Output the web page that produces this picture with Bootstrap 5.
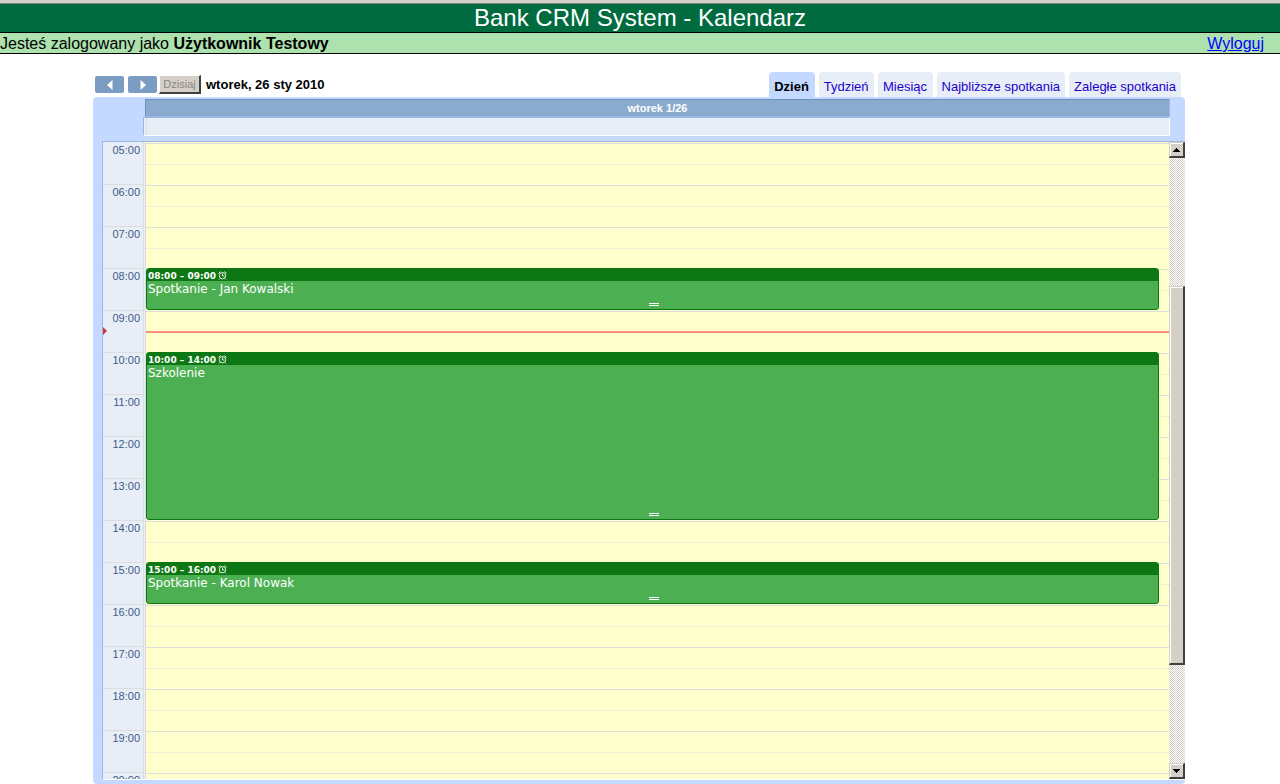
<!DOCTYPE html>
<html lang="pl">
<head>
<meta charset="utf-8">
<meta name="viewport" content="width=device-width, initial-scale=1">
<title>Bank CRM System - Kalendarz</title>
<link href="https://cdn.jsdelivr.net/npm/bootstrap@5.3.0/dist/css/bootstrap.min.css" rel="stylesheet">
<style>
  body { font-family: "Liberation Sans", Arial, sans-serif; font-size: 16px; line-height: 20px; color: #000; background: #fff; }
  .app-title { background: #006b3f; border-top: 1px solid #808080; border-bottom: 1px solid #000; box-shadow: 0 -3px #d4d0c8; margin-top: 3px; font-size: 24px; line-height: 28px; font-weight: 400; color: #fff; }
  .user-bar { height: 21px; line-height: 22px; background: #ade1ad; border-bottom: 1px solid #000; }
  .user-bar a { color: #00f; margin-right: 16px; }
  .calendar { padding: 18px 95px 0 93px; min-height: 0; }
  .cal-toolbar { height: 25px; padding: 0 4px 0 2px; }
  .step-btn { width: 29px; height: 17px; background: #7a9bc2; border: 0; border-radius: 2px; margin-right: 4px; }
  .today-btn { width: 42px; height: 19px; margin-left: -2px; margin-right: 5px; font-size: 11px; line-height: 16px; color: #8a8780; background: #d4d0c8; border: solid; border-width: 1px 2px 2px 1px; border-color: #fff #404040 #404040 #fff; white-space: nowrap; }
  .cal-date { font-size: 13px; line-height: 22px; }
  .view-tab { font-size: 13px; line-height: 25px; padding: 2px 5px 0; height: 25px; background: #e8eef7; color: #20c; text-decoration: none; text-align: center; border-radius: 4px 4px 0 0; white-space: nowrap; overflow: hidden; min-width: 55px; }
  .view-tab.current { background: #c3d9ff; color: #000; font-weight: 700; min-width: 46px; }
  .cal-frame { background: #c3d9ff; border-radius: 4px; padding: 2px 0 4px 9px; min-height: 0; }
  .day-head { margin: 0 15px 0 43px; height: 18px; background: #8aabce; border: solid; border-width: 1px 1px 1px 1px; border-color: #6b90bc #9bb9e0 #9bb9e0 #6b90bc; color: #fff; font-size: 11px; line-height: 17px; font-weight: 700; }
  .all-day { margin: 0 15px 5px 41px; height: 19px; background: #e8eef7; border: solid; border-width: 1px; border-color: #9bb9e0 #fff #fff #9bb9e0; padding-left: 1px; }
  .all-day::before { content: ""; display: block; width: 2px; height: 17px; border-right: 1px solid #ddd; }
  .grid-frame { border: solid; border-width: 1px 0 1px 1px; border-color: #9bb9e0 #fff #fff #9bb9e0; background: #e8eef7; min-height: 0; overflow: hidden; }
  .time-col { width: 40px; height: 0; flex: none; }
  .time-col li { height: 42px; border-top: 1px solid #ddd; padding-right: 3px; font-size: 11px; line-height: 14px; color: #3c5b87; text-align: right; }
  .time-col li:first-child { border-color: transparent; }
  .time-rule { width: 3px; flex: none; border: solid #ddd; border-width: 0 1px; }
  .day-col { background: #ffc; height: 100%; overflow: hidden; }
  .hour-slots { padding-top: 1px; }
  .hour-slot { height: 42px; border-top: 1px solid #ddd; padding-top: 20px; }
  .hour-slot::after { content: ""; display: block; border-top: 1px dotted #ddd; }
  .event { left: 0; right: 10px; background: #4cb052; border: 1px solid #0d7813; border-radius: 3px; color: #fff; overflow: hidden; }
  .event-time { background: #0d7813; height: 12px; padding-left: 1px; gap: 2px; font: 700 9px/14px "DejaVu Sans", Verdana, sans-serif; }
  .event-name { padding-left: 1px; font: 12px/17px "DejaVu Sans", Verdana, sans-serif; }
  .grip { left: 50%; bottom: 3px; width: 10px; height: 3px; margin-left: -4px; border: solid #fff; border-width: 1px 0; }
  .now-line { left: 0; right: 0; height: 2px; background: #ff9484; border-bottom: 1px dotted #e88070; }
  .now-mark { left: 0; }
  .scroller { width: 16px; flex: none; background: repeating-conic-gradient(#d4d0c8 0 25%, #fff 0 50%) 0 0 / 2px 2px; }
  .scroll-btn, .scroll-thumb { background: #d4d0c8; border: solid; border-width: 1px 2px 2px 1px; border-color: #d4d0c8 #404040 #404040 #d4d0c8; box-shadow: inset 1px 1px #fff; width: 16px; padding: 0; }
  .scroll-btn { height: 16px; line-height: 0; flex: none; }
  .space-above { flex: 129 1 0; }
  .scroll-thumb { flex: 378 1 0; }
  .space-below { flex: 98 1 0; }
</style>
</head>
<body class="vh-100 d-flex flex-column overflow-hidden">
<h1 class="app-title text-center mb-0 flex-shrink-0">Bank CRM System - Kalendarz</h1>
<div class="user-bar d-flex justify-content-between flex-shrink-0">
  <span>Jesteś zalogowany jako <b>Użytkownik Testowy</b></span>
  <a href="#">Wyloguj</a>
</div>

<main class="calendar d-flex flex-column flex-grow-1">
  <div class="cal-toolbar d-flex justify-content-between flex-shrink-0">
    <div class="d-flex align-items-center">
      <button class="step-btn d-flex align-items-center justify-content-center" aria-label="Poprzedni dzień"><svg width="6" height="10" viewBox="0 0 6 10"><path d="M5.500 0v10L0 5z" fill="#fff"/></svg></button>
      <button class="step-btn d-flex align-items-center justify-content-center" aria-label="Następny dzień"><svg width="6" height="10" viewBox="0 0 6 10"><path d="M.5 0v10L6 5z" fill="#fff"/></svg></button>
      <button class="today-btn p-0" disabled>Dzisiaj</button>
      <strong class="cal-date">wtorek, 26 sty 2010</strong>
    </div>
    <nav class="d-flex gap-1" aria-label="Widok">
      <a class="view-tab current" href="#">Dzień</a>
      <a class="view-tab" href="#">Tydzień</a>
      <a class="view-tab" href="#">Miesiąc</a>
      <a class="view-tab" href="#">Najbliższe spotkania</a>
      <a class="view-tab" href="#">Zaległe spotkania</a>
    </nav>
  </div>

  <div class="cal-frame d-flex flex-column flex-grow-1">
    <div class="day-head text-center flex-shrink-0">wtorek 1/26</div>
    <div class="all-day flex-shrink-0"></div>
    <div class="grid-frame d-flex flex-grow-1">
      <div class="position-relative">
        <ol class="time-col list-unstyled mb-0">
          <li>05:00</li><li>06:00</li><li>07:00</li><li>08:00</li><li>09:00</li><li>10:00</li><li>11:00</li><li>12:00</li>
          <li>13:00</li><li>14:00</li><li>15:00</li><li>16:00</li><li>17:00</li><li>18:00</li><li>19:00</li><li>20:00</li>
        </ol>
        <svg class="now-mark position-absolute" style="top:185px" width="4" height="8" viewBox="0 0 4 8"><path d="M0 0l4 4-4 4z" fill="#c33"/></svg>
      </div>
      <div class="time-rule"></div>
      <div class="day-col position-relative flex-grow-1">
        <div class="hour-slots">
          <div class="hour-slot"></div><div class="hour-slot"></div><div class="hour-slot"></div><div class="hour-slot"></div>
          <div class="hour-slot"></div><div class="hour-slot"></div><div class="hour-slot"></div><div class="hour-slot"></div>
          <div class="hour-slot"></div><div class="hour-slot"></div><div class="hour-slot"></div><div class="hour-slot"></div>
          <div class="hour-slot"></div><div class="hour-slot"></div><div class="hour-slot"></div><div class="hour-slot"></div>
        </div>
        <div class="now-line position-absolute" style="top:189px"></div>
        <article class="event position-absolute" style="top:126px;height:42px">
          <div class="event-time d-flex"><span>08:00 – 09:00</span><svg width="9" height="9" viewBox="0 0 9 9" class="align-self-center" fill="none" stroke="#fff"><use href="#alarm"/></svg></div>
          <div class="event-name">Spotkanie - Jan Kowalski</div>
          <div class="grip position-absolute"></div>
        </article>
        <article class="event position-absolute" style="top:210px;height:168px">
          <div class="event-time d-flex"><span>10:00 – 14:00</span><svg width="9" height="9" viewBox="0 0 9 9" class="align-self-center" fill="none" stroke="#fff"><use href="#alarm"/></svg></div>
          <div class="event-name">Szkolenie</div>
          <div class="grip position-absolute"></div>
        </article>
        <article class="event position-absolute" style="top:420px;height:42px">
          <div class="event-time d-flex"><span>15:00 – 16:00</span><svg width="9" height="9" viewBox="0 0 9 9" class="align-self-center" fill="none" stroke="#fff"><use href="#alarm"/></svg></div>
          <div class="event-name">Spotkanie - Karol Nowak</div>
          <div class="grip position-absolute"></div>
        </article>
      </div>
      <div class="scroller d-flex flex-column">
        <button class="scroll-btn" aria-label="Przewiń w górę"><svg width="7" height="4" viewBox="0 0 7 4" shape-rendering="crispEdges"><path d="M3 0h1v1h1v1h1v1h1v1H0V3h1V2h1V1h1z"/></svg></button>
        <div class="space-above"></div>
        <div class="scroll-thumb"></div>
        <div class="space-below"></div>
        <button class="scroll-btn" aria-label="Przewiń w dół"><svg width="7" height="4" viewBox="0 0 7 4" shape-rendering="crispEdges"><path d="M0 0h7v1H6v1H5v1H4v1H3V3H2V2H1V1H0z"/></svg></button>
      </div>
    </div>
  </div>
</main>

<svg width="0" height="0" class="position-absolute" aria-hidden="true">
  <symbol id="alarm" viewBox="0 0 9 9"><path d="M.5 2.500l2-2M6.500.5l2 2M4.500 2.500v2.500h2M2 7.500l-1 1M7 7.500l1 1" stroke-width=".9"/><circle cx="4.500" cy="4.700" r="3.200" stroke-width=".9"/></symbol>
</svg>
<script src="https://cdn.jsdelivr.net/npm/bootstrap@5.3.0/dist/js/bootstrap.bundle.min.js"></script>
</body>
</html>
